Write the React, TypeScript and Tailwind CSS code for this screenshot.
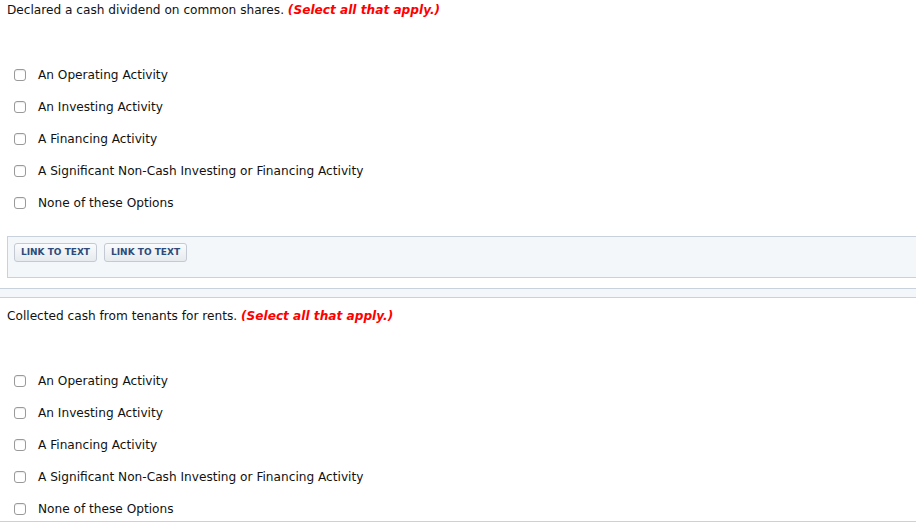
import React from 'react';

const options = [
  'An Operating Activity',
  'An Investing Activity',
  'A Financing Activity',
  'A Significant Non-Cash Investing or Financing Activity',
  'None of these Options',
];

const Option: React.FC<{ label: string }> = ({ label }) => (
  <label className="flex h-[26px] items-center pt-[2px]">
    <span className="ml-[14px] h-[12px] w-[12px] rounded-[3px] border border-[#9a9a9a] bg-white shadow-[inset_0_1px_1px_rgba(0,0,0,0.08)]"></span>
    <span className="ml-[12px]">{label}</span>
  </label>
);

const Question: React.FC<{ prompt: string }> = ({ prompt }) => (
  <div>
    <p className="h-[20px] pl-[7px] leading-[21px]">
      {prompt}{' '}
      <span className="font-bold italic text-[#ff0000]">(Select all that apply.)</span>
    </p>
    <div className="mt-[41px] flex flex-col gap-[6px]">
      {options.map(o => (
        <Option key={o} label={o} />
      ))}
    </div>
  </div>
);

const LinkButton: React.FC = () => (
  <button className="h-[19px] rounded-[3px] border border-[#c3cad4] bg-gradient-to-b from-[#fafbfc] to-[#e7eaee] px-[6px] text-[9px] font-bold leading-[17px] text-[#2d4b7a]">
    LINK TO TEXT
  </button>
);

export default function App() {
  return (
    <div className="min-h-[529px] bg-white font-['Verdana','DejaVu_Sans',sans-serif] text-[12.15px] text-[#111]">
      <Question prompt="Declared a cash dividend on common shares." />

      <div className="ml-[7px] mt-[21px] flex h-[42px] gap-[7px] border border-r-0 border-[#c9d1dc] bg-[#f4f7fa] pl-[6px] pt-[6px]">
        <LinkButton />
        <LinkButton />
      </div>

      <div className="mt-[10px] h-[10px] border-y border-[#c9d1dc] bg-[#f4f7fa]"></div>

      <div className="mt-[8px] border-b border-[#c9d1dc]">
        <Question prompt="Collected cash from tenants for rents." />
      </div>
    </div>
  );
}
